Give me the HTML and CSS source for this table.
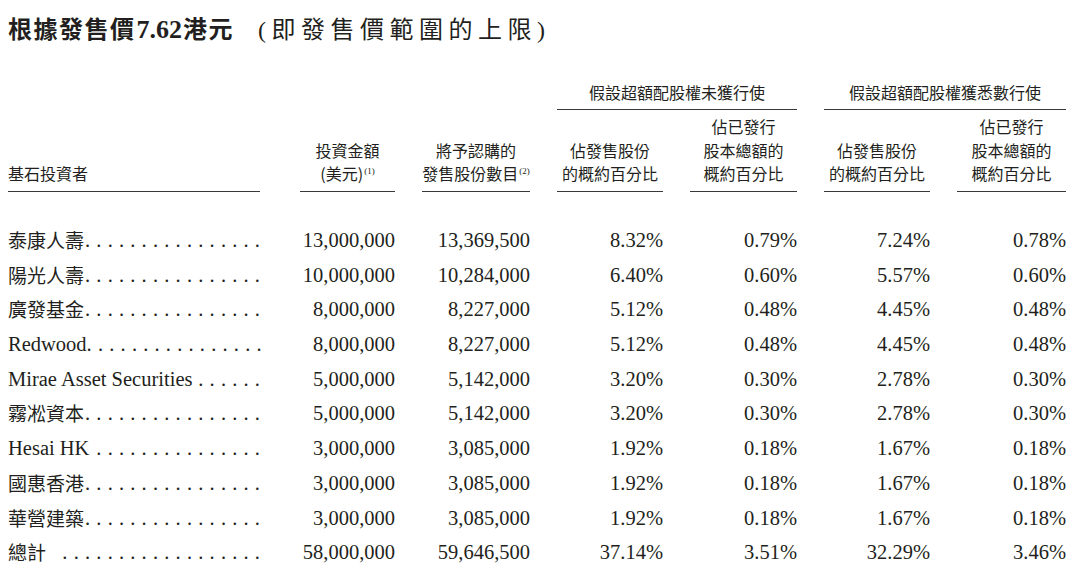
FILE: index.html
```html
<!DOCTYPE html>
<html lang="zh-Hant">
<head>
<meta charset="utf-8">
<title>基石投資者</title>
<link rel="stylesheet" href="styles.css">
</head>
<body>
<div class="page">
  <h1 class="title"><span class="tb">根據發售價<span class="tnum">7.62</span>港元</span><span class="tr"><span class="par">(</span>即發售價範圍的上限<span class="par">)</span></span></h1>

  <div class="grid">
    <div class="grp g1">假設超額配股權未獲行使</div>
    <div class="grp g2">假設超額配股權獲悉數行使</div>

    <div class="hd c1 left">基石投資者</div>
    <div class="hd c2">投資金額<br>(美元)<sup>(1)</sup></div>
    <div class="hd c3">將予認購的<br>發售股份數目<sup>(2)</sup></div>
    <div class="hd c4">佔發售股份<br>的概約百分比</div>
    <div class="hd c5">佔已發行<br>股本總額的<br>概約百分比</div>
    <div class="hd c6">佔發售股份<br>的概約百分比</div>
    <div class="hd c7">佔已發行<br>股本總額的<br>概約百分比</div>

    <div class="spacer"></div>

    <div class="nm"><span class="cjk">泰康人壽</span><span class="dots">................</span></div>
    <div class="v">13,000,000</div><div class="v">13,369,500</div><div class="v">8.32%</div><div class="v">0.79%</div><div class="v">7.24%</div><div class="v">0.78%</div>

    <div class="nm"><span class="cjk">陽光人壽</span><span class="dots">................</span></div>
    <div class="v">10,000,000</div><div class="v">10,284,000</div><div class="v">6.40%</div><div class="v">0.60%</div><div class="v">5.57%</div><div class="v">0.60%</div>

    <div class="nm"><span class="cjk">廣發基金</span><span class="dots">................</span></div>
    <div class="v">8,000,000</div><div class="v">8,227,000</div><div class="v">5.12%</div><div class="v">0.48%</div><div class="v">4.45%</div><div class="v">0.48%</div>

    <div class="nm"><span>Redwood</span><span class="dots">................</span></div>
    <div class="v">8,000,000</div><div class="v">8,227,000</div><div class="v">5.12%</div><div class="v">0.48%</div><div class="v">4.45%</div><div class="v">0.48%</div>

    <div class="nm"><span>Mirae Asset Securities</span><span class="dots">......</span></div>
    <div class="v">5,000,000</div><div class="v">5,142,000</div><div class="v">3.20%</div><div class="v">0.30%</div><div class="v">2.78%</div><div class="v">0.30%</div>

    <div class="nm"><span class="cjk">霧凇資本</span><span class="dots">................</span></div>
    <div class="v">5,000,000</div><div class="v">5,142,000</div><div class="v">3.20%</div><div class="v">0.30%</div><div class="v">2.78%</div><div class="v">0.30%</div>

    <div class="nm"><span>Hesai HK</span><span class="dots">...............</span></div>
    <div class="v">3,000,000</div><div class="v">3,085,000</div><div class="v">1.92%</div><div class="v">0.18%</div><div class="v">1.67%</div><div class="v">0.18%</div>

    <div class="nm"><span class="cjk">國惠香港</span><span class="dots">................</span></div>
    <div class="v">3,000,000</div><div class="v">3,085,000</div><div class="v">1.92%</div><div class="v">0.18%</div><div class="v">1.67%</div><div class="v">0.18%</div>

    <div class="nm"><span class="cjk">華營建築</span><span class="dots">................</span></div>
    <div class="v">3,000,000</div><div class="v">3,085,000</div><div class="v">1.92%</div><div class="v">0.18%</div><div class="v">1.67%</div><div class="v">0.18%</div>

    <div class="nm"><span class="tot">總計</span><span class="dots">..................</span></div>
    <div class="v">58,000,000</div><div class="v">59,646,500</div><div class="v">37.14%</div><div class="v">3.51%</div><div class="v">32.29%</div><div class="v">3.46%</div>
  </div>
</div>
</body>
</html>
```

FILE: styles.css
```css
html, body {
  margin: 0;
  padding: 0;
  background: #ffffff;
}

body {
  color: #231f20;
  font-family: "Liberation Serif", "Noto Sans CJK TC", serif;
}

.page {
  padding: 0 8px;
  width: 1064px;
}

.title {
  margin: 0;
  padding-top: 15px;
  height: 28px;
  line-height: 26px;
  font-size: 24px;
  white-space: nowrap;
}

.tb {
  font-family: "Noto Sans CJK TC", sans-serif;
  font-weight: 700;
  letter-spacing: 1.5px;
}

.tnum {
  font-family: "Liberation Serif", serif;
  font-weight: 700;
  font-size: 26px;
  letter-spacing: 0;
  margin: 0 1px;
}

.tr {
  font-family: "Noto Sans CJK TC", sans-serif;
  font-weight: 400;
  font-size: 24px;
  letter-spacing: 5.5px;
  margin-left: 24px;
}

.par {
  font-family: "Liberation Serif", serif;
  font-size: 24px;
}

.grid {
  display: grid;
  grid-template-columns: 265px 95px 108px 106px 107px 106px 109px;
  column-gap: 27px;
  margin-top: 37px;
}

.grid > .nm,
.grid > .hd.c1 {
  margin-right: 13px;
}

.grp {
  grid-row: 1;
  font-family: "Noto Sans CJK TC", sans-serif;
  font-size: 16px;
  line-height: 24px;
  text-align: center;
  padding-bottom: 5px;
  border-bottom: 1.5px solid #3b3838;
}

.g1 { grid-column: 4 / span 2; }
.g2 { grid-column: 6 / span 2; }

.hd {
  grid-row: 2;
  align-self: end;
  font-family: "Noto Sans CJK TC", sans-serif;
  font-size: 16px;
  line-height: 23.5px;
  text-align: center;
  white-space: nowrap;
  padding-top: 5px;
  padding-bottom: 5px;
  border-bottom: 1.5px solid #3b3838;
}

.hd.left {
  text-align: left;
}

.hd sup {
  font-family: "Liberation Serif", serif;
  font-size: 9px;
  vertical-align: 6px;
  line-height: 0;
  margin-left: 1px;
}

.spacer {
  grid-column: 1 / -1;
  height: 31.5px;
}

.nm {
  display: flex;
  height: 34.7px;
  line-height: 34.7px;
  font-size: 20.5px;
  white-space: nowrap;
}

.cjk,
.tot {
  font-family: "Noto Sans CJK TC", sans-serif;
  font-size: 19px;
  font-weight: 400;
}

.dots {
  margin-left: auto;
  margin-right: -6.2px;
  letter-spacing: 6.2px;
}

.v {
  height: 34.7px;
  line-height: 34.7px;
  font-size: 20.5px;
  text-align: right;
  white-space: nowrap;
}
```
